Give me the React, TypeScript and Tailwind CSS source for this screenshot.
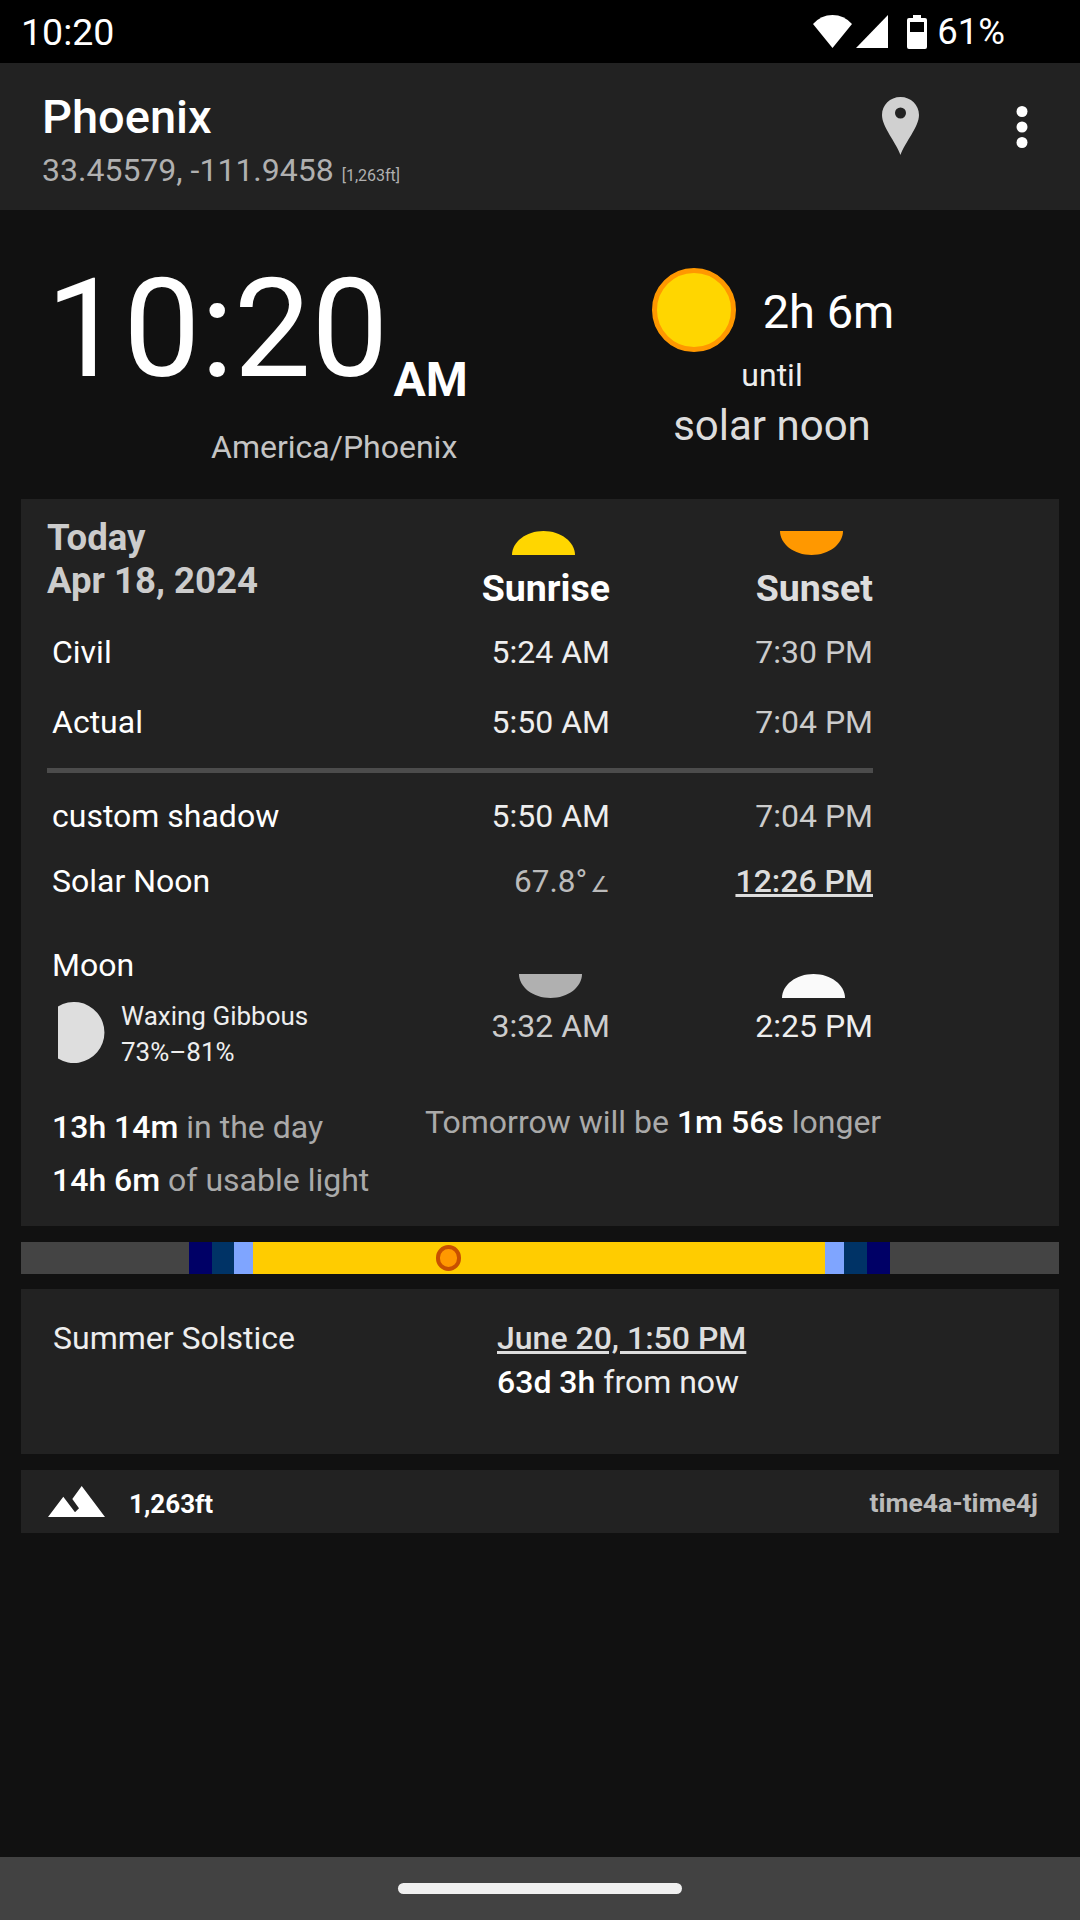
import React from "react";

function Wifi() {
  return (
    <svg width="39" height="33" viewBox="0 0 39 33" className="block">
      <path d="M19.5 33 L0 9 Q8 0 19.5 0 Q31 0 39 9 Z" fill="#fff" />
    </svg>
  );
}
function Signal() {
  return (
    <svg width="32" height="33" viewBox="0 0 32 33" className="block">
      <path d="M0 33 L32 0 V33 Z" fill="#fff" />
    </svg>
  );
}
function Battery() {
  return (
    <svg width="20" height="34" viewBox="0 0 20 34" className="block">
      <path fillRule="evenodd" d="M6 0 H14 V3 H18 Q20 3 20 5 V32 Q20 34 18 34 H2 Q0 34 0 32 V5 Q0 3 2 3 H6 Z M3 7 V17 H17 V7 Z" fill="#fff" />
    </svg>
  );
}
function Pin() {
  return (
    <svg width="37" height="58" viewBox="0 0 37 58" className="block">
      <path fillRule="evenodd" d="M18.5 58 C14 45 0 30 0 18 C0 8 8 0 18.5 0 C29 0 37 8 37 18 C37 30 23 45 18.5 58 Z M18.5 10.500 A5.500 5.500 0 1 0 18.500 21.500 A5.500 5.500 0 1 0 18.500 10.500 Z" fill="#d0d0d0" />
    </svg>
  );
}
function Dots() {
  return (
    <svg width="12" height="43" viewBox="0 0 12 43" className="block">
      <circle cx="6" cy="5.500" r="5.500" fill="#fff" />
      <circle cx="6" cy="21" r="5.500" fill="#fff" />
      <circle cx="6" cy="36.500" r="5.500" fill="#fff" />
    </svg>
  );
}
function Dome({ color, down }: { color: string; down?: boolean }) {
  return (
    <svg width="63" height="24" viewBox="0 0 63 24" className="block">
      <path d={down ? "M0 0 H63 C63 13 49 24 31.500 24 C14 24 0 13 0 0 Z" : "M0 24 H63 C63 11 49 0 31.500 0 C14 0 0 11 0 24 Z"} fill={color} />
    </svg>
  );
}
function MoonPhase() {
  return (
    <svg width="47" height="61" viewBox="0 0 47 61" className="block">
      <path d="M0 4.500 A30.500 30.500 0 1 1 0 56.500 Z" fill="#dedede" />
    </svg>
  );
}
function Mountain() {
  return (
    <svg width="57" height="31" viewBox="0 0 57 31" className="block">
      <polygon points="0,31 15.300,10.700 27,26.300 31,22.300 24.300,13 33.700,0 57,31" fill="#fff" />
    </svg>
  );
}

function Row({ label, a, b, rowClass, aClass, bClass }: { label: string; a: React.ReactNode; b: React.ReactNode; rowClass: string; aClass: string; bClass: string }) {
  return (
    <div className={"grid grid-cols-[300px_263px_263px] items-center text-[32px] leading-[40px] " + rowClass}>
      <div className="pl-[5px] text-white">{label}</div>
      <div className={"text-right " + aClass}>{a}</div>
      <div className={"text-right " + bClass}>{b}</div>
    </div>
  );
}

export default function App() {
  return (
    <div className="w-[1080px] h-[1920px] flex flex-col bg-[#111111] font-[Roboto,sans-serif] text-white overflow-hidden">
      <div className="h-[63px] bg-black flex items-center justify-between pl-[21px] pr-[75px] shrink-0">
        <span className="text-[37.500px] leading-[40px]">10:20</span>
        <div className="flex items-center">
          <Wifi />
          <div className="ml-[4px]"><Signal /></div>
          <div className="ml-[19px]"><Battery /></div>
          <span className="ml-[10px] text-[36.500px] leading-[40px]">61%</span>
        </div>
      </div>

      <div className="h-[147px] bg-[#222222] flex justify-between pl-[42px] pr-[52px] shrink-0">
        <div className="pt-[29px]">
          <div className="text-[47px] leading-[50px] font-medium">Phoenix</div>
          <div className="mt-[8px] text-[32px] leading-[40px] text-[#b0b0b0]">
            33.45579, -111.9458 <span className="text-[16px]">[1,263ft]</span>
          </div>
        </div>
        <div className="flex items-start">
          <div className="mt-[34px]"><Pin /></div>
          <div className="ml-[97px] mt-[43px]"><Dots /></div>
        </div>
      </div>

      <div className="h-[289px] flex shrink-0">
        <div className="w-[560px] pt-[49px] pl-[46px]">
          <div className="flex items-start h-[168px]">
            <span className="text-[137.500px] leading-[140px] font-normal">10:20</span>
            <span className="ml-[5px] mt-[97px] text-[48px] leading-[48px] font-bold">AM</span>
          </div>
          <div className="pl-[165px] text-[32px] leading-[40px] text-[#c4c4c4]">America/Phoenix</div>
        </div>
        <div className="w-[424px] pt-[58px] flex flex-col items-center">
          <div className="flex items-center gap-[27px]">
            <div className="ml-[2px] w-[84px] h-[84px] rounded-full bg-[#FFD600] border-[5px] border-[#FF9800]" />
            <span className="mt-[3px] text-[47px] leading-[50px]">2h 6m</span>
          </div>
          <div className="mt-[3px] text-[32px] leading-[40px] text-[#eeeeee]">until</div>
          <div className="mt-[6px] text-[42px] leading-[50px] text-[#dddddd]">solar noon</div>
        </div>
      </div>

      <div className="mx-[21px] h-[727px] bg-[#222222] pl-[26px] shrink-0">
        <div className="grid grid-cols-[300px_263px_263px] h-[118px]">
          <div className="pt-[17px] text-[36.600px] leading-[43px] font-bold text-[#cccccc] whitespace-nowrap">
            <div>Today</div>
            <div>Apr 18, 2024</div>
          </div>
          <div className="flex flex-col items-end pt-[32px]">
            <div className="mr-[35px]"><Dome color="#FFD600" /></div>
            <div className="mt-[11px] text-[37.500px] leading-[44px] font-bold">Sunrise</div>
          </div>
          <div className="flex flex-col items-end pt-[32px]">
            <div className="mr-[30px]"><Dome color="#FF9800" down /></div>
            <div className="mt-[11px] text-[37.500px] leading-[44px] font-bold text-[#dddddd]">Sunset</div>
          </div>
        </div>

        <Row label="Civil" a="5:24 AM" b="7:30 PM" rowClass="h-[70px]" aClass="text-[#eeeeee]" bClass="text-[#cccccc]" />
        <Row label="Actual" a="5:50 AM" b="7:04 PM" rowClass="h-[70px]" aClass="text-[#eeeeee]" bClass="text-[#cccccc]" />
        <div className="mt-[11px] w-[826px] h-[5px] bg-[#4c4c4c]" />
        <Row label="custom shadow" a="5:50 AM" b="7:04 PM" rowClass="mt-[11px] h-[64px]" aClass="text-[#eeeeee]" bClass="text-[#cccccc]" />
        <Row
          label="Solar Noon"
          a={<><span className="text-[31.500px]">67.8°</span><span className="ml-[3px] text-[22px] font-['DejaVu_Sans']">∠</span></>}
          b={<span className="underline font-medium">12:26 PM</span>}
          rowClass="h-[65px]"
          aClass="text-[#bbbbbb] pt-[4px]"
          bClass="text-[#dddddd]"
        />

        <div className="grid grid-cols-[300px_263px_263px] h-[157px]">
          <div className="pt-[32px]">
            <div className="pl-[5px] text-[32px] leading-[40px]">Moon</div>
            <div className="flex mt-[13px] pl-[11px]">
              <div className="mt-[4px]"><MoonPhase /></div>
              <div className="ml-[16px] text-[26px] leading-[36px] text-[#eeeeee] whitespace-nowrap">
                <div>Waxing Gibbous</div>
                <div>73%–81%</div>
              </div>
            </div>
          </div>
          <div className="flex flex-col items-end pt-[61px]">
            <div className="mr-[28px]"><Dome color="#b0b0b0" down /></div>
            <div className="mt-[8px] text-[32px] leading-[40px] text-[#cccccc]">3:32 AM</div>
          </div>
          <div className="flex flex-col items-end pt-[61px]">
            <div className="mr-[28px]"><Dome color="#fafafa" /></div>
            <div className="mt-[8px] text-[32px] leading-[40px] text-[#eeeeee]">2:25 PM</div>
          </div>
        </div>

        <div className="flex mt-[31px] pl-[5px] text-[32px] leading-[53px] text-[#aaaaaa]">
          <div className="w-[373px]">
            <div><b className="font-medium text-white">13h 14m</b> in the day</div>
            <div><b className="font-medium text-white">14h 6m</b> of usable light</div>
          </div>
          <div className="-mt-[5px]">Tomorrow will be <b className="font-medium text-white">1m 56s</b> longer</div>
        </div>
      </div>

      <div className="mx-[21px] mt-[16px] h-[32px] flex bg-[#444444] relative shrink-0">
        <div className="w-[168px]" />
        <div className="w-[23px] bg-[#000066]" />
        <div className="w-[22px] bg-[#003366]" />
        <div className="w-[19px] bg-[#7FA5FF]" />
        <div className="w-[572px] bg-[#FFCC00]" />
        <div className="w-[19px] bg-[#7FA5FF]" />
        <div className="w-[23px] bg-[#003366]" />
        <div className="w-[23px] bg-[#000066]" />
        <div className="absolute left-[415px] top-[3px] w-[25px] h-[26px] rounded-full bg-[#FF9800] border-[4px] border-[#C85000]" />
      </div>

      <div className="mx-[21px] mt-[15px] h-[165px] bg-[#222222] flex pt-[27px] pl-[32px] text-[32px] leading-[44px] shrink-0">
        <div className="w-[444px] text-[#eeeeee]">Summer Solstice</div>
        <div>
          <div className="font-medium underline text-[#dddddd]">June 20, 1:50 PM</div>
          <div className="text-[#eeeeee]"><b className="font-medium text-white">63d 3h</b> from now</div>
        </div>
      </div>

      <div className="mx-[21px] mt-[16px] h-[63px] bg-[#222222] flex items-center justify-between pl-[27px] pr-[21px] shrink-0">
        <div className="flex items-center">
          <Mountain />
          <span className="ml-[24px] mt-[5px] text-[26px] leading-[34px] font-bold">1,263ft</span>
        </div>
        <span className="mt-[3px] text-[26.500px] leading-[34px] font-bold text-[#bbbbbb]">time4a-time4j</span>
      </div>

      <div className="flex-1" />
      <div className="h-[63px] bg-[#424242] flex justify-center pt-[26px] shrink-0">
        <div className="w-[284px] h-[11px] rounded-full bg-[#f0f0f0]" />
      </div>
    </div>
  );
}
